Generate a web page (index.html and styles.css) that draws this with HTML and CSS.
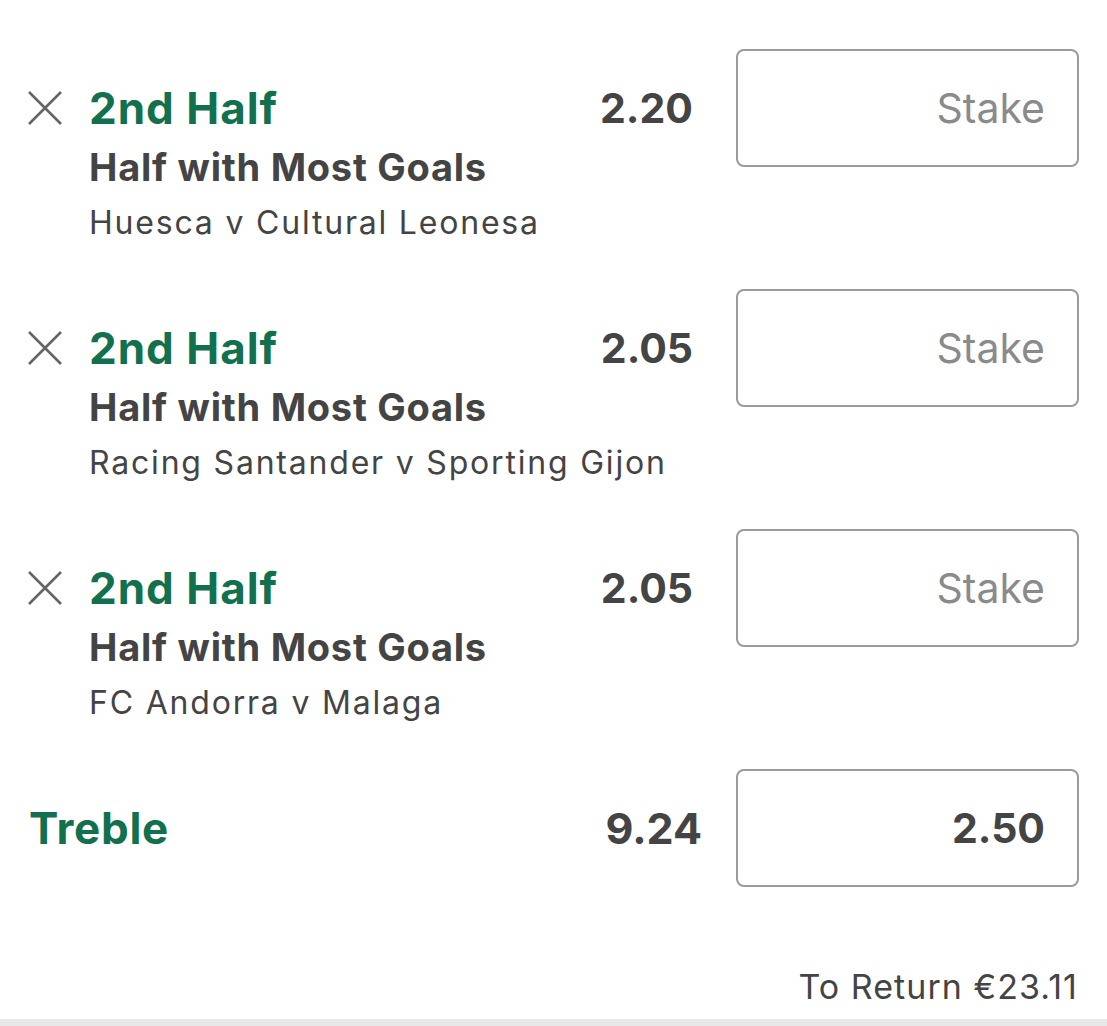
FILE: index.html
```html
<!DOCTYPE html>
<html lang="en">
<head>
<meta charset="utf-8">
<title>Bet Slip</title>
<link rel="stylesheet" href="styles.css">
</head>
<body>
<div class="slip">
  <div class="bet">
    <button class="remove" aria-label="Remove">
      <svg width="34" height="34" viewBox="0 0 34 34"><path d="M1 1 L33 33 M33 1 L1 33" stroke="#666" stroke-width="2.6" fill="none"/></svg>
    </button>
    <div class="info">
      <div class="selection">2nd Half</div>
      <div class="market">Half with Most Goals</div>
      <div class="event">Huesca v Cultural Leonesa</div>
    </div>
    <div class="odds">2.20</div>
    <div class="stake"><span class="placeholder">Stake</span></div>
  </div>
  <div class="bet">
    <button class="remove" aria-label="Remove">
      <svg width="34" height="34" viewBox="0 0 34 34"><path d="M1 1 L33 33 M33 1 L1 33" stroke="#666" stroke-width="2.6" fill="none"/></svg>
    </button>
    <div class="info">
      <div class="selection">2nd Half</div>
      <div class="market">Half with Most Goals</div>
      <div class="event">Racing Santander v Sporting Gijon</div>
    </div>
    <div class="odds">2.05</div>
    <div class="stake"><span class="placeholder">Stake</span></div>
  </div>
  <div class="bet">
    <button class="remove" aria-label="Remove">
      <svg width="34" height="34" viewBox="0 0 34 34"><path d="M1 1 L33 33 M33 1 L1 33" stroke="#666" stroke-width="2.6" fill="none"/></svg>
    </button>
    <div class="info">
      <div class="selection">2nd Half</div>
      <div class="market">Half with Most Goals</div>
      <div class="event">FC Andorra v Malaga</div>
    </div>
    <div class="odds">2.05</div>
    <div class="stake"><span class="placeholder">Stake</span></div>
  </div>
  <div class="multiple">
    <div class="multi-name">Treble</div>
    <div class="multi-odds">9.24</div>
    <div class="stake"><span class="value">2.50</span></div>
  </div>
  <div class="returns">To Return €23.11</div>
  <div class="divider"></div>
</div>
</body>
</html>
```

FILE: styles.css
```css
* { box-sizing: border-box; }
html, body {
  margin: 0;
  padding: 0;
  background: #fff;
}
body {
  font-family: Inter, "Noto Sans", "Liberation Sans", sans-serif;
  color: #444;
}
.slip {
  padding-top: 49px;
  display: flex;
  flex-direction: column;
}
.bet {
  display: flex;
  align-items: flex-start;
  padding: 0 28px;
  height: 240px;
}
.remove {
  width: 34px;
  height: 52px;
  margin-top: 33px;
  padding: 0;
  border: 0;
  background: none;
  display: flex;
  align-items: center;
  justify-content: center;
  flex: none;
}
.remove svg { display: block; }
.info {
  flex: 1;
  min-width: 0;
  margin-left: 27px;
  padding-top: 33px;
  white-space: nowrap;
}
.selection {
  font-size: 44px;
  line-height: 52px;
  font-weight: 700;
  letter-spacing: 1px;
  color: #12704e;
}
.market {
  font-size: 38px;
  line-height: 66px;
  font-weight: 700;
  letter-spacing: 0.75px;
  color: #444;
}
.event {
  font-size: 32px;
  line-height: 46px;
  font-weight: 400;
  letter-spacing: 1.8px;
  color: #444;
}
.odds {
  margin-top: 33px;
  font-size: 41px;
  line-height: 52px;
  font-weight: 700;
  color: #444;
  margin-right: 43px;
  flex: none;
}
.stake {
  width: 343px;
  height: 118px;
  border: 2px solid #9b9b9b;
  border-radius: 8px;
  display: flex;
  align-items: center;
  justify-content: flex-end;
  padding-right: 32px;
  flex: none;
}
.placeholder {
  font-size: 41px;
  font-weight: 400;
  color: #8a8a8a;
}
.value {
  font-size: 41px;
  font-weight: 700;
  color: #444;
}
.multiple {
  display: flex;
  align-items: center;
  padding: 0 28px 0 29px;
  height: 118px;
}
.multi-name {
  flex: 1;
  font-size: 44px;
  font-weight: 700;
  letter-spacing: 0.7px;
  color: #12704e;
}
.multi-odds {
  font-size: 43px;
  font-weight: 700;
  color: #444;
  margin-right: 34px;
}
.returns {
  margin-top: 78px;
  text-align: right;
  padding-right: 29px;
  font-size: 34px;
  line-height: 44px;
  letter-spacing: 1.05px;
  color: #444;
}
.divider {
  margin-top: 10px;
  height: 8px;
  background: #e8e8e8;
}
```
